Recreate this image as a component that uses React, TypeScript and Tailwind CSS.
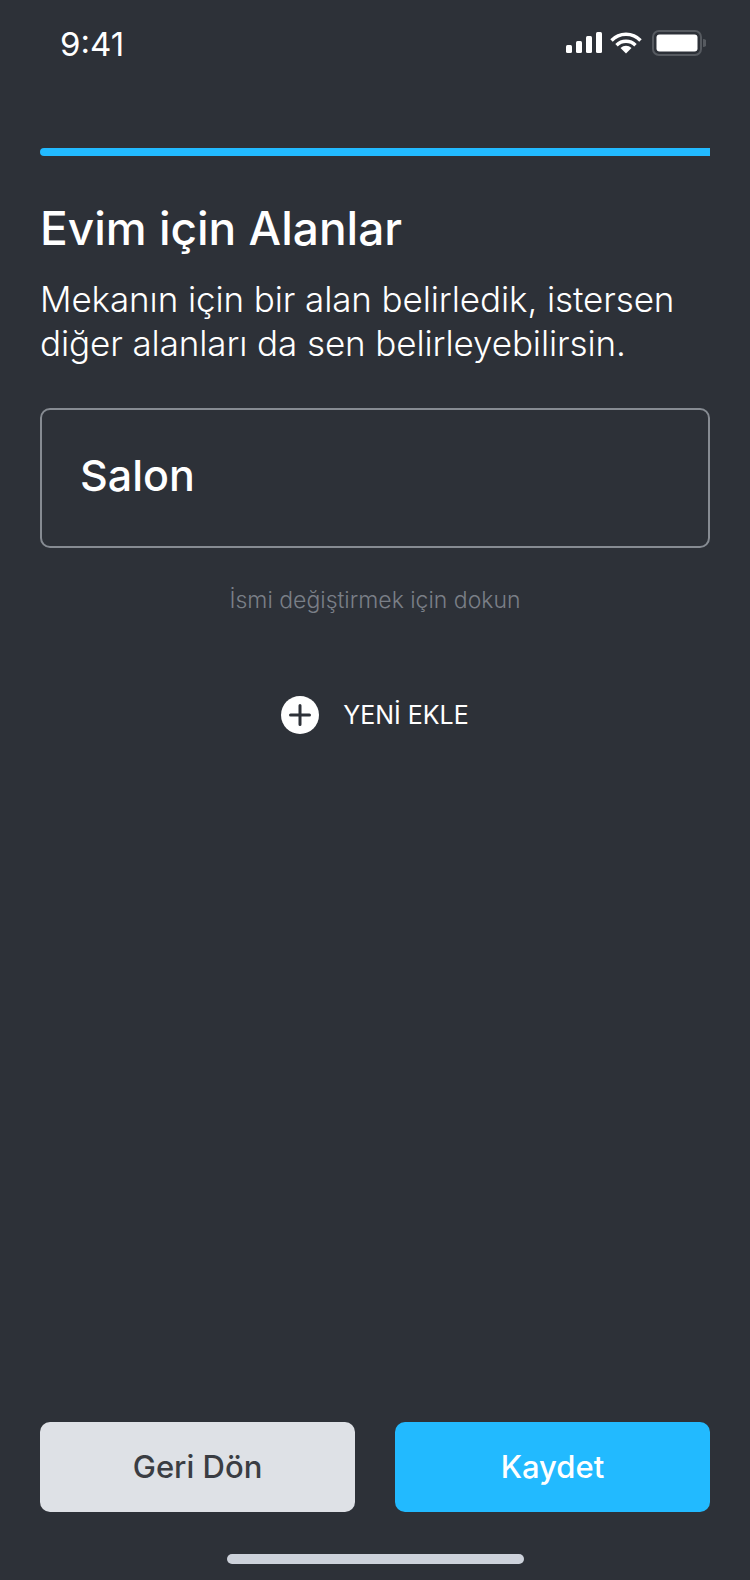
export default function App() {
  return (
    <div className="flex h-[1580px] w-[750px] flex-col bg-[#2d3138] font-['Inter','Liberation_Sans',sans-serif] text-white">
      <div className="flex h-[88px] items-start justify-between pl-[60px] pr-[44px] pt-[24px]">
        <span className="font-['Inter',sans-serif] text-[33px] leading-[40px]">9:41</span>
        <svg width="142" height="28" viewBox="0 0 142 28" className="mt-[6px]">
          <g fill="#fff">
            <rect x="2" y="15" width="6" height="8" rx="1.5" />
            <rect x="12" y="11" width="6" height="12" rx="1.5" />
            <rect x="22" y="6" width="6" height="17" rx="1.5" />
            <rect x="32" y="2" width="6" height="21" rx="1.5" />
            <path d="M62 23.5 L56.5 18 a8 8 0 0 1 11 0 Z" />
          </g>
          <path d="M47.5 10.5 a20 20 0 0 1 29 0 M52.5 15.2 a13.5 13.5 0 0 1 19 0" fill="none" stroke="#fff" strokeWidth="3.4" />
          <rect x="89" y="1" width="48" height="24" rx="6" fill="none" stroke="#565a60" strokeWidth="2" />
          <rect x="92.5" y="4.5" width="41" height="17" rx="3" fill="#fff" />
          <path d="M139 9 a4 4 0 0 1 0 8 Z" fill="#565a60" />
        </svg>
      </div>
      <div className="flex flex-1 flex-col px-[40px]">
        <div className="mt-[60px] h-[8px] rounded-l-full bg-[#22baff]" />
        <h1 className="mt-[47px] text-[46px] font-medium leading-[50px]">Evim için Alanlar</h1>
        <p className="mt-[24px] text-[35px] font-light leading-[44px] tracking-[-0.1px]">
          Mekanın için bir alan belirledik, istersen
          <br />
          diğer alanları da sen belirleyebilirsin.
        </p>
        <div className="mt-[43px] flex h-[140px] items-center rounded-[10px] border-2 border-[#868b92] pb-[6px] pl-[38px]">
          <span className="text-[43px] font-medium leading-[50px]">Salon</span>
        </div>
        <p className="mt-[37px] text-center text-[23px] font-light leading-[30px] text-[#7a7f87]">İsmi değiştirmek için dokun</p>
        <div className="mt-[81px] flex items-center justify-center gap-[24px]">
          <svg width="38" height="38" viewBox="0 0 38 38">
            <circle cx="19" cy="19" r="19" fill="#fff" />
            <path d="M19 9.5v19M9.5 19h19" stroke="#2d3138" strokeWidth="3" strokeLinecap="round" />
          </svg>
          <span className="text-[25px] font-normal leading-[34px]">YENİ EKLE</span>
        </div>
        <div className="mt-auto flex gap-[40px]">
          <button className="h-[90px] flex-1 rounded-[10px] bg-[#dee1e6] text-[31px] font-medium text-[#3a3d43]">Geri Dön</button>
          <button className="h-[90px] flex-1 rounded-[10px] bg-[#22baff] text-[31px] font-medium text-white">Kaydet</button>
        </div>
      </div>
      <div className="flex h-[68px] justify-center pt-[42px]">
        <div className="h-[10px] w-[297px] rounded-full bg-[#cdd2db]" />
      </div>
    </div>
  );
}
